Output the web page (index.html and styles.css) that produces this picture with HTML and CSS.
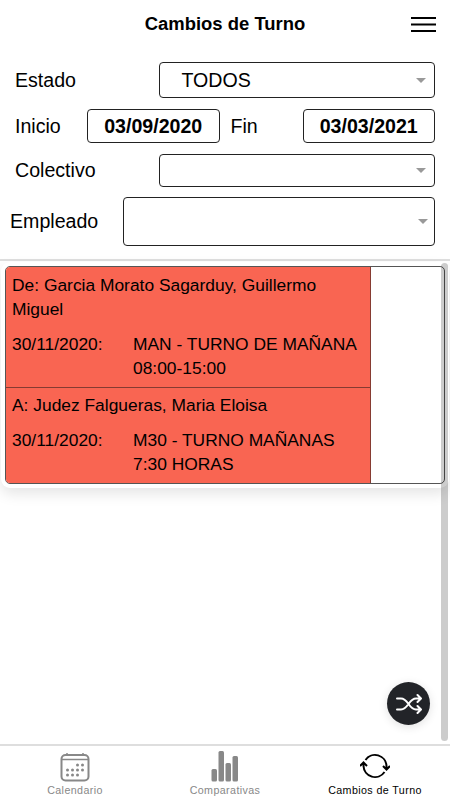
FILE: index.html
```html
<!DOCTYPE html>
<html lang="es">
<head>
<meta charset="utf-8">
<title>Cambios de Turno</title>
<link rel="stylesheet" href="styles.css">
</head>
<body>
<header class="header">
  <h1>Cambios de Turno</h1>
  <button class="menu" aria-label="Menú"><svg width="26" height="16" viewBox="0 0 26 16"><path d="M1 2h25M1 8.500h25M1 15h25"/></svg></button>
</header>
<section class="filters">
  <div class="row estado"><label>Estado</label><div class="field select"><span>TODOS</span><i class="caret"></i></div></div>
  <div class="row dates"><label>Inicio</label><div class="field date">03/09/2020</div><label class="fin">Fin</label><div class="field date">03/03/2021</div></div>
  <div class="row colectivo"><label>Colectivo</label><div class="field select"><i class="caret"></i></div></div>
  <div class="row empleado"><label>Empleado</label><div class="field select"><i class="caret"></i></div></div>
</section>
<main class="list">
  <div class="card">
    <div class="shifts">
      <article class="shift">
        <p>De: Garcia Morato Sagarduy, Guillermo Miguel</p>
        <div class="detail"><span>30/11/2020:</span><span>MAN - TURNO DE MAÑANA<br>08:00-15:00</span></div>
      </article>
      <article class="shift">
        <p>A: Judez Falgueras, Maria Eloisa</p>
        <div class="detail"><span>30/11/2020:</span><span>M30 - TURNO MAÑANAS<br>7:30 HORAS</span></div>
      </article>
    </div>
  </div>
  <div class="scrollbar"></div>
  <button class="fab" aria-label="Nuevo cambio"><svg width="26" height="22" viewBox="0 0 26 22"><path d="M1 5.500h4c3 0 5 2 7.500 5.500s4.500 5.500 7.500 5.500h4.500M1 16.500h4c3 0 5-2 7.500-5.500S17 5.500 20 5.500h4.500M21.500 2 25 5.500 21.500 9M21.500 13l3.500 3.500-3.500 3.500"/></svg></button>
</main>
<nav class="tabs">
  <a class="tab"><svg width="30" height="30" viewBox="0 0 30 30"><rect class="line" x="1.500" y="3" width="27" height="25.500" rx="4"/><path class="line thin" d="M1.500 7.500h27M7 1v2M23 1v2"/><g><circle cx="17.500" cy="13" r="1.500"/><circle cx="22.500" cy="13" r="1.500"/><circle cx="7.500" cy="18" r="1.500"/><circle cx="12.500" cy="18" r="1.500"/><circle cx="17.500" cy="18" r="1.500"/><circle cx="22.500" cy="18" r="1.500"/><circle cx="7.500" cy="23" r="1.500"/><circle cx="12.500" cy="23" r="1.500"/><circle cx="17.500" cy="23" r="1.500"/></g></svg><span>Calendario</span></a>
  <a class="tab"><svg width="30" height="32" viewBox="0 0 30 32"><rect x="1.500" y="19" width="5.500" height="12.500" rx="1.500"/><rect x="8.500" y="1" width="5.500" height="30.500" rx="1.500"/><rect x="15.500" y="13" width="5.500" height="18.500" rx="1.500"/><rect x="22.500" y="6" width="5.500" height="25.500" rx="1.500"/></svg><span>Comparativas</span></a>
  <a class="tab active"><svg width="30" height="26" viewBox="0 0 30 26"><path class="line" d="M5.500 7A11.500 11.500 0 0 1 26.500 13v3M23 13l3.500 3.500L30 13M24.500 19A11.500 11.500 0 0 1 3.500 13v-3M0 13l3.500-3.500L7 13"/></svg><span>Cambios de Turno</span></a>
</nav>
</body>
</html>
```
FILE: styles.css
```css
* { box-sizing: border-box; }
body {
  margin: 0; width: 450px; height: 800px; overflow: hidden;
  display: flex; flex-direction: column;
  background: #fff; color: #000;
  font-family: "Liberation Sans", Arial, sans-serif;
}
button { border: 0; background: none; padding: 0; }
svg { display: block; }
.header { height: 48px; display: grid; grid-template-columns: 1fr auto 1fr; align-items: center; }
h1 { grid-column: 2; margin: 0; font-size: 18.450px; line-height: 24px; }
.menu { justify-self: end; margin-right: 14px; }
.menu path { stroke: #000; stroke-width: 2; }
.filters { height: 213px; padding: 14px 15px 0; border-bottom: 2px solid #dedede; }
.row { display: flex; align-items: center; font-size: 19.600px; }
.row label { width: 143.500px; flex: none; }
.field { flex: 1; height: 100%; border: 1px solid #222; border-radius: 4px; display: flex; align-items: center; }
.select { padding: 0 8px 0 22px; }
.caret { margin-left: auto; border: 5.500px solid transparent; border-top-color: #999; border-bottom: 0; }
.estado { height: 36px; }
.dates { height: 34px; margin-top: 11px; }
.dates label { width: 72px; }
.dates label.fin { width: 83px; padding-left: 11px; }
.date { justify-content: center; font-weight: bold; }
.colectivo { height: 33px; margin-top: 11px; }
.empleado { height: 49px; margin-top: 10px; }
.empleado label { width: 113px; margin-left: -5px; }
.empleado .select { padding-right: 6px; }
.list { flex: 1; position: relative; padding: 5px 5px 0; }
.card { height: 218px; border: 1px solid #555; border-radius: 5px; overflow: hidden; box-shadow: 0 0 0 4px #fff, 0 6px 14px 4px rgba(0,0,0,.1); }
.shifts { width: 365px; height: 100%; background: #f96552; border-right: 1px solid #863b32; }
.shift { padding: 5px 6px 0; font-size: 17.400px; line-height: 24px; }
.shift:first-child { height: 121px; padding-top: 6px; border-bottom: 1px solid #863b32; }
.shift p { margin: 0 0 11px; }
.detail { display: grid; grid-template-columns: 121px 1fr; white-space: nowrap; }
.scrollbar { position: absolute; right: 2px; top: 2px; bottom: 3px; width: 7px; border-radius: 4px; background: rgba(0,0,0,.2); }
.fab { position: absolute; right: 20px; bottom: 19px; width: 43px; height: 43px; border-radius: 50%; background: #222428; display: grid; place-items: center; box-shadow: 0 2px 10px rgba(0,0,0,.12); }
.fab path { fill: none; stroke: #fff; stroke-width: 2; stroke-linecap: round; stroke-linejoin: round; }
.tabs { height: 56px; border-top: 2px solid #dedede; display: grid; grid-template-columns: repeat(3, 1fr); }
.tab { display: flex; flex-direction: column; align-items: center; justify-content: flex-end; padding-bottom: 3px; color: #888; fill: currentColor; font-size: 10.700px; line-height: 13px; letter-spacing: .4px; }
.tab svg { margin-bottom: 2px; }
.tab.active { color: #000; }
.tab.active svg { margin-bottom: 5px; }
.line { fill: none; stroke: currentColor; stroke-width: 2; }
.thin { stroke-width: 1.500; }
```
